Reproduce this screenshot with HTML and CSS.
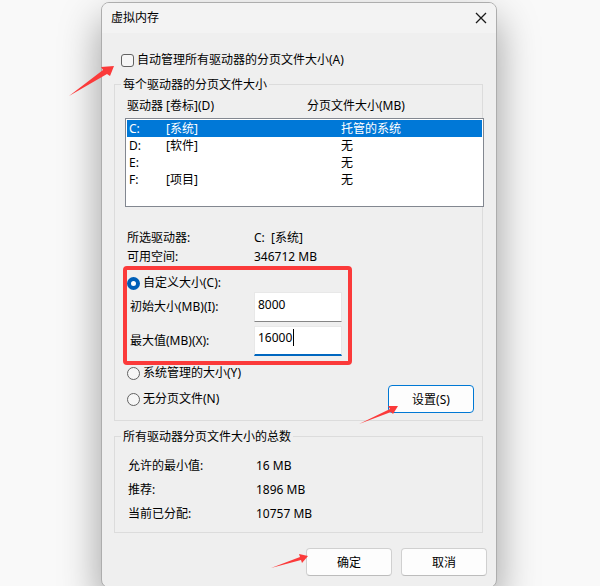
FILE: index.html
```html
<!DOCTYPE html>
<html lang="zh-CN">
<head>
    <meta charset="UTF-8">
    <meta name="viewport" content="width=device-width, initial-scale=1.0">
    <title>虚拟内存</title>
    <link rel="stylesheet" href="styles.css">
</head>
<body>
    <form class="dialog">
        <header class="title-bar">
            <h1>虚拟内存</h1>
            <button type="button" class="close-button" aria-label="关闭">
                <svg width="12" height="12" viewBox="0 0 12 12">
                    <path d="M1 1 L11 11 M11 1 L1 11" fill="none" stroke="#1a1a1a" stroke-width="1.3"/>
                </svg>
            </button>
        </header>

        <div class="auto-row">
            <input type="checkbox" id="auto-manage">
            <label for="auto-manage">自动管理所有驱动器的分页文件大小(A)</label>
            <svg class="arrow arrow-auto" width="46" height="32" viewBox="0 0 46 32">
                <path d="M0 31 L34 5 L32 2 L45 1 L41 11 L38 9 Z"/>
            </svg>
        </div>

        <fieldset class="group drives">
            <legend>每个驱动器的分页文件大小</legend>
            <div class="list-head">
                <span>驱动器 [卷标](D)</span>
                <span>分页文件大小(MB)</span>
            </div>
            <div class="drive-list">
                <table>
                    <tbody>
                        <tr class="selected"><td class="letter">C:</td><td class="volume">[系统]</td><td>托管的系统</td></tr>
                        <tr><td class="letter">D:</td><td class="volume">[软件]</td><td>无</td></tr>
                        <tr><td class="letter">E:</td><td class="volume"></td><td>无</td></tr>
                        <tr><td class="letter">F:</td><td class="volume">[项目]</td><td>无</td></tr>
                    </tbody>
                </table>
            </div>

            <dl class="drive-info">
                <dt>所选驱动器:</dt>
                <dd>C:&nbsp; [系统]</dd>
                <dt>可用空间:</dt>
                <dd>346712 MB</dd>
            </dl>

            <div class="custom-size">
                <div class="option">
                    <input type="radio" name="size" id="size-custom" checked>
                    <label for="size-custom">自定义大小(C):</label>
                </div>
                <div class="size-fields">
                    <label for="initial-size">初始大小(MB)(I):</label>
                    <input type="text" id="initial-size" value="8000">
                    <label for="max-size">最大值(MB)(X):</label>
                    <div class="active-field">
                        <input type="text" id="max-size" value="16000">
                        <span class="caret"></span>
                    </div>
                </div>
            </div>

            <div class="other-sizes">
                <div class="options">
                    <div class="option">
                        <input type="radio" name="size" id="size-system">
                        <label for="size-system">系统管理的大小(Y)</label>
                    </div>
                    <div class="option">
                        <input type="radio" name="size" id="size-none">
                        <label for="size-none">无分页文件(N)</label>
                    </div>
                </div>
                <div class="button-wrap">
                    <button type="button" class="button button-set">设置(S)</button>
                    <svg class="arrow arrow-set" width="40" height="20" viewBox="0 0 40 20">
                        <path d="M0 19 L31 4 L29 1 L39 1 L34 9 L32 7 Z"/>
                    </svg>
                </div>
            </div>
        </fieldset>

        <fieldset class="group totals">
            <legend>所有驱动器分页文件大小的总数</legend>
            <dl>
                <dt>允许的最小值:</dt>
                <dd>16 MB</dd>
                <dt>推荐:</dt>
                <dd>1896 MB</dd>
                <dt>当前已分配:</dt>
                <dd>10757 MB</dd>
            </dl>
        </fieldset>

        <footer class="actions">
            <div class="button-wrap">
                <button type="submit" class="button">确定</button>
                <svg class="arrow arrow-ok" width="38" height="16" viewBox="0 0 38 16">
                    <path d="M0 15 L29 4 L28 1 L37 3 L31 10 L30 7 Z"/>
                </svg>
            </div>
            <button type="button" class="button">取消</button>
        </footer>
    </form>
</body>
</html>
```
FILE: styles.css
```css
* {
    margin: 0;
    padding: 0;
    box-sizing: border-box;
    font-family: "Noto Sans", "Noto Sans CJK SC", sans-serif;
}

body {
    background: #f9f9f9;
    color: #000;
    font-size: 12px;
    line-height: 16px;
    padding: 2px 103px 0 101px;
    overflow: hidden;
}

.dialog {
    background: #efefef;
    border: 1px solid #adadad;
    border-radius: 8px;
    box-shadow: 0 18px 40px rgba(0, 0, 0, 0.38);
    padding-bottom: 11px;
}

.title-bar {
    display: flex;
    justify-content: space-between;
    align-items: center;
    height: 30px;
    padding: 0 9px;
    background: #f3f3f3;
    border-radius: 7px 7px 0 0;
}

.title-bar h1 {
    font-size: 12px;
    font-weight: normal;
}

.close-button {
    display: flex;
    background: none;
    border: none;
}

input[type="checkbox"],
input[type="radio"] {
    appearance: none;
    width: 13px;
    height: 13px;
    background: #f6f6f6;
    border: 1px solid #626262;
    flex: none;
}

input[type="checkbox"] {
    border-radius: 3px;
}

input[type="radio"] {
    border-radius: 50%;
}

input[type="radio"]:checked {
    background: #fff;
    border: 4px solid #005fb8;
}

.auto-row {
    position: relative;
    display: flex;
    align-items: center;
    gap: 3px;
    padding: 19px 19px 8px;
}

.group {
    margin: 0 13px 0 12px;
    min-width: 0;
    border: 1px solid #dcdcdc;
}

.group legend {
    margin-left: 6px;
    padding: 1px 2px 0;
    line-height: 15px;
}

.drives {
    padding-top: 6px;
}

.list-head {
    display: grid;
    grid-template-columns: 180px 1fr;
    padding-left: 12px;
}

.drive-list {
    height: 89px;
    margin: 4px -2px 0 10px;
    padding: 1px;
    background: #fff;
    border: 1px solid #828790;
}

.drive-list table {
    width: 100%;
    border-collapse: collapse;
    table-layout: fixed;
}

.drive-list td {
    height: 17px;
}

.drive-list .letter {
    width: 39px;
    padding-left: 2px;
}

.drive-list .volume {
    width: 175px;
}

.drive-list .selected {
    background: #0078d7;
    color: #fff;
}

.drive-info {
    display: grid;
    grid-template-columns: 127px 1fr;
    margin-top: 21px;
    padding-left: 12px;
    line-height: 19px;
}

/* highlighted block */
.custom-size {
    width: fit-content;
    margin-left: 8px;
    padding: 5px 6px 5px 0;
    border: 4px solid #fb3a3a;
    border-radius: 4px;
}

.option {
    display: flex;
    align-items: center;
    gap: 3px;
}

.size-fields {
    display: grid;
    grid-template-columns: 124px 88px;
    align-items: center;
    row-gap: 4px;
    margin-top: 1px;
    padding-left: 3px;
}

.size-fields input {
    display: block;
    width: 100%;
    height: 30px;
    padding: 0 3px 6px;
    background: #fff;
    border: 1px solid #e8e8e8;
    border-bottom-color: #868686;
    font-size: 12px;
    outline: none;
}

.active-field {
    position: relative;
}

.size-fields .active-field input {
    border-bottom: 2px solid #0067c0;
}

.caret {
    position: absolute;
    left: 39px;
    top: 3px;
    width: 1px;
    height: 17px;
    background: #000;
}

.other-sizes {
    display: flex;
    justify-content: space-between;
    align-items: flex-end;
    padding: 0 8px 7px 12px;
}

.options {
    display: flex;
    flex-direction: column;
    gap: 10px;
    padding-bottom: 6px;
}

.button-wrap {
    position: relative;
}

.button {
    display: block;
    width: 86px;
    height: 28px;
    background: #fdfdfd;
    border: 1px solid #d0d0d0;
    border-bottom-color: #bcbcbc;
    border-radius: 4px;
    color: #000;
    font-size: 12px;
}

.button-set {
    border-color: #0078d4;
}

.totals {
    margin-top: 7px;
    padding: 10px 0 6px;
}

.totals dl {
    display: grid;
    grid-template-columns: 128px 1fr;
    padding-left: 13px;
    line-height: 24px;
}

.actions {
    display: flex;
    justify-content: flex-end;
    gap: 9px;
    padding: 15px 9px 0;
}

/* red pointers over the controls */
.arrow {
    position: absolute;
    fill: #fb3a3a;
    pointer-events: none;
}

.arrow-auto {
    left: -33px;
    top: 32px;
}

.arrow-set {
    left: -29px;
    top: 20px;
}

.arrow-ok {
    left: -35px;
    top: 5px;
}
```
